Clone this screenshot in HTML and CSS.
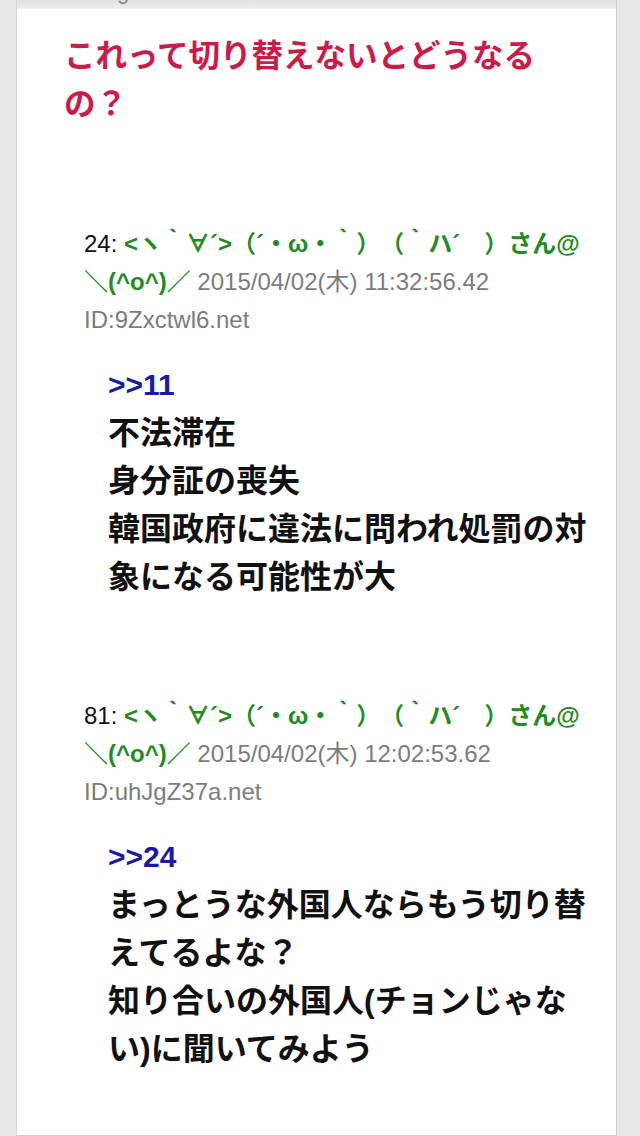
FILE: index.html
```html
<!DOCTYPE html>
<html lang="ja">
<head>
  <meta charset="UTF-8">
  <title>これって切り替えないとどうなるの？</title>
  <link rel="stylesheet" href="styles.css">
</head>
<body>

  <div class="page">
    <div class="prev-bar"><span>Pages</span></div>

    <h1 class="title">これって切り替えないとどうなるの？</h1>

    <div class="post">
      <div class="post-head">
        <span class="num">24:</span>
        <span class="name">&lt;ヽ｀∀´&gt;（´・ω・｀）（｀ハ´　）さん@<span class="nw">＼(^o^)／</span></span>
        <span class="meta">2015/04/02(木) 11:32:56.42 ID:9Zxctwl6.net</span>
      </div>
      <div class="post-body">
        <a class="anchor">&gt;&gt;11</a><br>
        不法滞在<br>
        身分証の喪失<br>
        韓国政府に違法に問われ処罰の対象になる可能性が大
      </div>
    </div>

    <div class="post">
      <div class="post-head">
        <span class="num">81:</span>
        <span class="name">&lt;ヽ｀∀´&gt;（´・ω・｀）（｀ハ´　）さん@<span class="nw">＼(^o^)／</span></span>
        <span class="meta">2015/04/02(木) 12:02:53.62 ID:uhJgZ37a.net</span>
      </div>
      <div class="post-body">
        <a class="anchor">&gt;&gt;24</a><br>
        まっとうな外国人ならもう切り替えてるよな？<br>
        知り合いの外国人(チョンじゃない)に聞いてみよう
      </div>
    </div>
  </div>

</body>
</html>
```

FILE: styles.css
```css
body {
  margin: 0;
  background: #e6e6e6;
  font-family: "Liberation Sans", "Noto Sans CJK JP", sans-serif;
  text-spacing-trim: space-all;
}

.page {
  margin: 0 23px 0 16px;
  padding: 0 20px 30px 47px;
  background: #fff;
  border-left: 1px solid #d4d4d4;
  border-right: 1px solid #cfcfcf;
  border-bottom: 1px solid #cfcfcf;
  min-height: 1105px;
}

.prev-bar {
  height: 8px;
  margin: 0 -20px 0 -47px;
  overflow: hidden;
  background: linear-gradient(#e2e2e2, #ececec);
  border-bottom: 1px solid #f2f2f2;
}

.prev-bar span {
  display: block;
  margin: -21px 0 0 73px;
  font-size: 22px;
  line-height: 26px;
  color: #888;
}

.title {
  margin: 23px 0 0 0;
  font-size: 31.5px;
  line-height: 48px;
  font-weight: bold;
  color: #cc1a4a;
}

.post {
  margin-top: 97px;
  padding-left: 20px;
}

.post + .post {
  margin-top: 96px;
}

.post-head {
  font-size: 24px;
  line-height: 38px;
  color: #111;
}

.name {
  color: #228b22;
  font-weight: bold;
}

.nw {
  white-space: nowrap;
}

.meta {
  color: #7c7c7c;
}

.post-body {
  margin-top: 21px;
  padding-left: 24px;
  font-size: 32px;
  line-height: 48px;
  font-weight: bold;
  color: #111;
}

.anchor {
  color: #1a1aa6;
  font-size: 30px;
}
```
